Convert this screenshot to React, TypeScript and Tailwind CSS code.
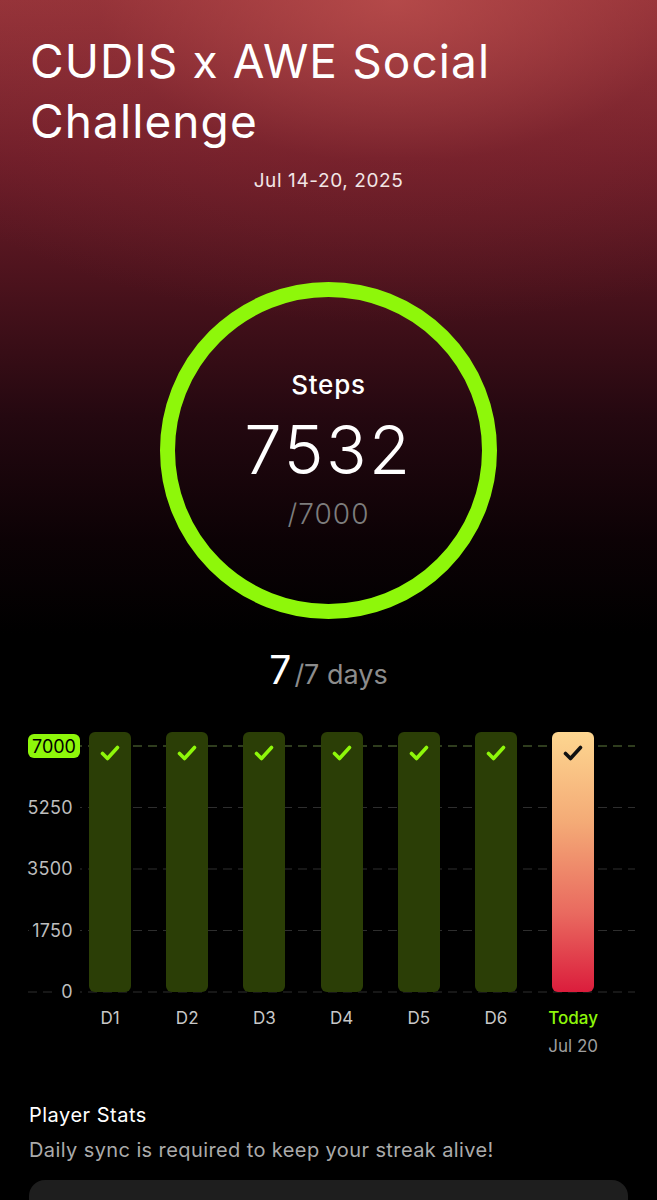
import React from "react";

const FONT = "font-['Inter','Noto_Sans',sans-serif]";

const yTicks = ["7000", "5250", "3500", "1750", "0"];
const days = ["D1", "D2", "D3", "D4", "D5", "D6"];

const Check = ({ color }: { color: string }) => (
  <svg width="20" height="16" viewBox="0 0 20 16" fill="none">
    <path
      d="M2.5 8.5 L7.5 13.5 L17.5 2.5"
      stroke={color}
      strokeWidth="3.6"
      strokeLinecap="round"
      strokeLinejoin="round"
    />
  </svg>
);

const Bar = ({ label }: { label: string }) => (
  <div className="flex w-[42px] flex-col items-center">
    <div className="flex h-[260px] w-[42px] justify-center rounded-[6px] bg-[#2b3e06] pt-[13px]">
      <Check color="#8ef70a" />
    </div>
    <span className="mt-[14px] text-[17px] leading-[24px] text-[#c8c8c8]">{label}</span>
  </div>
);

export default function App() {
  return (
    <div
      className={`${FONT} min-h-screen w-full bg-black bg-[radial-gradient(90%_45%_at_60%_0%,rgba(190,80,78,0.75)_0%,rgba(150,50,55,0.25)_50%,rgba(0,0,0,0)_100%),linear-gradient(180deg,#96343a_0%,#6e1d29_22%,#4a121c_40%,#240810_58%,#0c0205_75%,#000_88%)] bg-[length:100%_720px] bg-no-repeat text-white`}
    >
      {/* header */}
      <div className="px-[30px] pt-[31px]">
        <h1 className="text-[46px] font-normal leading-[60px] tracking-[1.1px]">
          CUDIS x AWE Social Challenge
        </h1>
      </div>
      <p className="mt-[18px] text-center text-[19px] leading-[24px] tracking-[0.6px] text-[#f2e6e6]">
        Jul 14-20, 2025
      </p>

      {/* ring */}
      <div className="mt-[89px] flex justify-center">
        <div className="flex h-[337px] w-[337px] flex-col items-center rounded-full border-[15px] border-[#8ef70a] pt-[73px]">
          <span className="text-[26px] font-medium leading-[30px] tracking-[0.8px]">Steps</span>
          <span className="mt-[17px] text-[67px] font-light leading-[66px] tracking-[2.5px]">7532</span>
          <span className="mt-[16px] text-[28px] font-light leading-[30px] tracking-[1px] text-[#7d7d7d]">/7000</span>
        </div>
      </div>

      <div className="mt-[28px] flex items-baseline justify-center">
        <span className="text-[39px] leading-[46px]">7</span>
        <span className="ml-[3px] text-[27px] leading-[46px] text-[#8c8c8c]">/7 days</span>
      </div>

      {/* chart */}
      <div className="relative ml-[28px] mr-[22px] mt-[34px]">
        <svg className="absolute left-0 top-0" width="607" height="262">
          {[14, 75.5, 137, 198.5, 260].map((y) => (
            <line
              key={y}
              x1="0"
              x2="607"
              y1={y}
              y2={y}
              stroke={y === 14 ? "#5f7a3c" : "#2e2e2e"}
              strokeWidth="1"
              strokeDasharray="9 6"
            />
          ))}
        </svg>
        <div className="relative flex items-start">
          <div className="mt-[2px] flex h-[270px] w-[52px] flex-col items-end justify-between">
            {yTicks.map((t) =>
              t === "7000" ? (
                <span
                  key={t}
                  className="flex h-[24px] w-[52px] items-center justify-center rounded-[6px] bg-[#8ef70a] text-[18px] text-black"
                >
                  {t}
                </span>
              ) : (
                <span key={t} className="bg-black pl-[3px] pr-[7px] text-[18px] leading-[24px] tracking-[0.3px] text-[#bdbdbd]">
                  {t}
                </span>
              )
            )}
          </div>
          <div className="ml-[9px] flex gap-[35.2px]">
            {days.map((d) => (
              <Bar key={d} label={d} />
            ))}
            <div className="flex w-[42px] flex-col items-center">
              <div className="flex h-[260px] w-[42px] justify-center rounded-[6px] bg-[linear-gradient(180deg,#fdd690_0%,#f4aa76_35%,#e9695f_70%,#db1d3c_100%)] pt-[13px]">
                <Check color="#111" />
              </div>
              <span className="mt-[14px] text-[17px] font-medium leading-[24px] text-[#8ef70a]">Today</span>
              <span className="mt-[4px] whitespace-nowrap text-[17px] leading-[24px] text-[#9e9e9e]">Jul 20</span>
            </div>
          </div>
        </div>
      </div>

      {/* stats */}
      <div className="px-[29px] pt-[45px]">
        <h2 className="text-[20px] leading-[24px] tracking-[0.5px] text-white">Player Stats</h2>
        <p className="mt-[11px] text-[20px] leading-[24px] tracking-[0.4px] text-[#ababab]">
          Daily sync is required to keep your streak alive!
        </p>
        <div className="mt-[18px] h-[120px] rounded-[16px] bg-[#1e1e1e]" />
      </div>
    </div>
  );
}
